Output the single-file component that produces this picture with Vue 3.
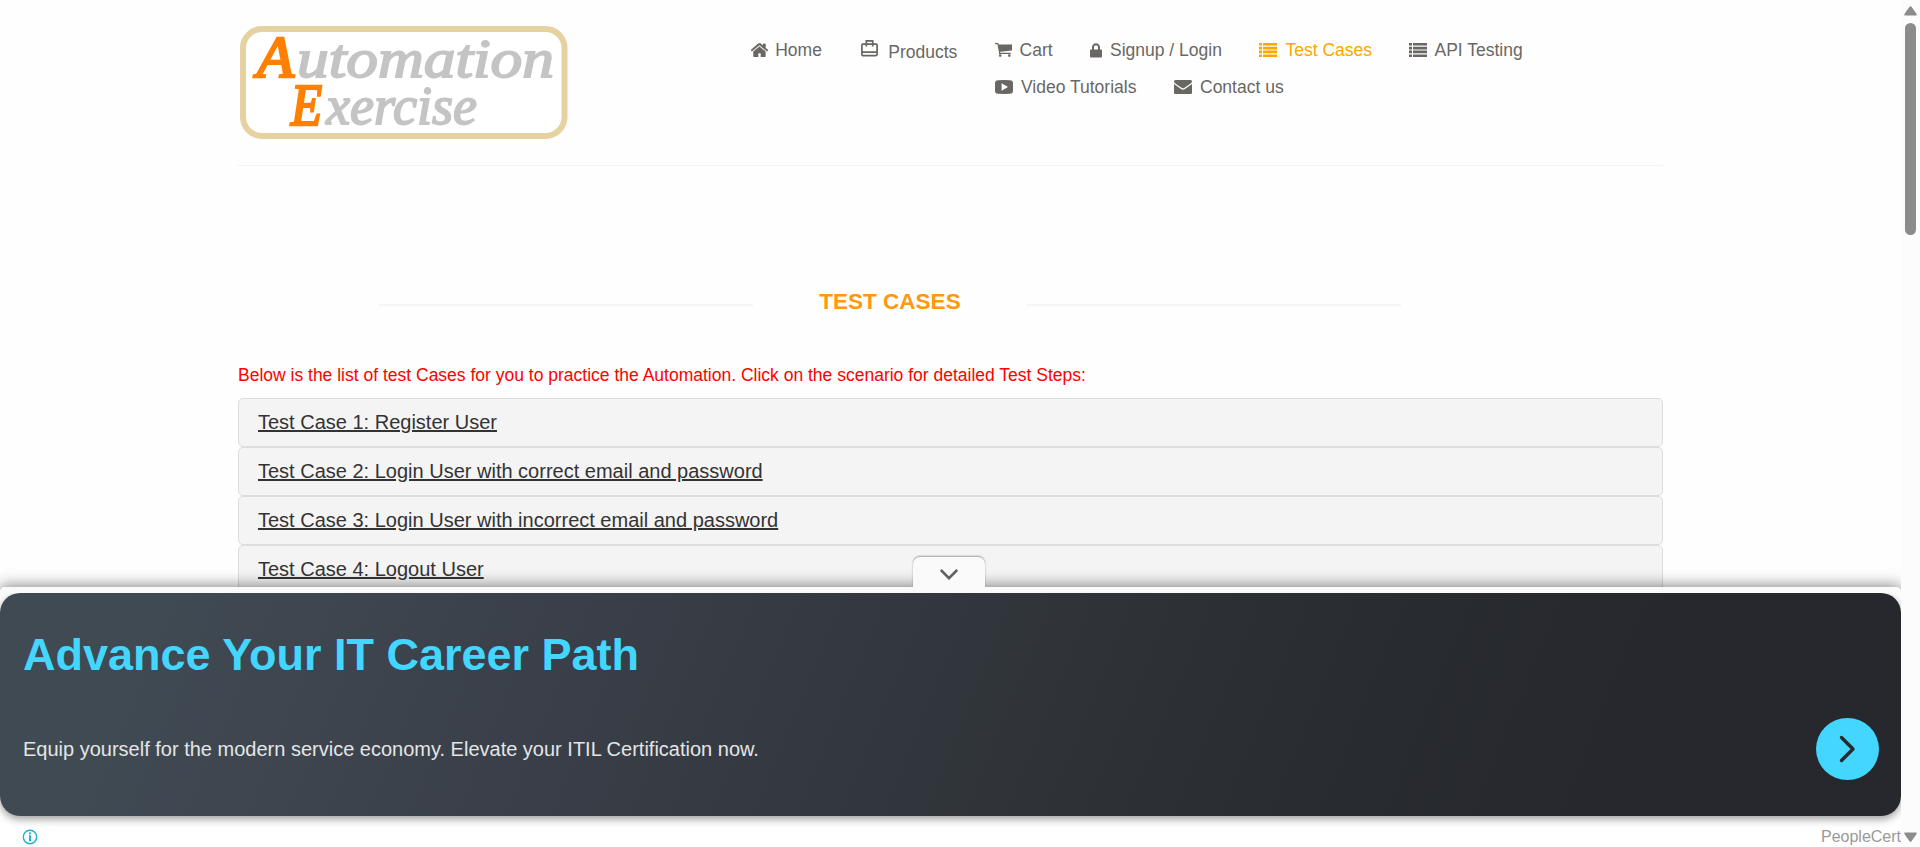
<script setup>
const topRow = [
  { id: 'home', label: 'Home', w: 110, iw: 24.2 },
  { id: 'products', label: 'Products', w: 134, iw: 27.3, low: true },
  { id: 'cart', label: 'Cart', w: 95, iw: 24.6 },
  { id: 'lock', label: 'Signup / Login', w: 169, iw: 20 },
  { id: 'list', label: 'Test Cases', w: 150, iw: 26.5, active: true },
  { id: 'list', label: 'API Testing', w: 130, iw: 25.5 },
]
const bottomRow = [
  { id: 'video', label: 'Video Tutorials', w: 179, iw: 26 },
  { id: 'mail', label: 'Contact us', w: 130, iw: 26 },
]
const cases = [
  'Test Case 1: Register User',
  'Test Case 2: Login User with correct email and password',
  'Test Case 3: Login User with incorrect email and password',
  'Test Case 4: Logout User',
]
</script>

<template>
  <div class="page">
    <div class="viewport">
      <header class="header">
        <svg class="logo" width="327" height="113" viewBox="0 0 327 113">
          <rect x="3" y="3" width="321.5" height="107" rx="19" fill="#fff" stroke="#e6d1a1" stroke-width="6" />
          <g class="script">
            <text x="17" y="51" class="big" textLength="37" lengthAdjust="spacingAndGlyphs">A</text>
            <text x="57" y="51" textLength="257" lengthAdjust="spacingAndGlyphs">utomation</text>
            <text x="51" y="99" class="big" textLength="31" lengthAdjust="spacingAndGlyphs">E</text>
            <text x="86" y="98" textLength="151" lengthAdjust="spacingAndGlyphs">xercise</text>
          </g>
        </svg>
        <nav class="nav">
          <ul v-for="(row, r) in [topRow, bottomRow]" :key="r" class="row" :class="{ second: r === 1 }">
            <li v-for="item in row" :key="item.label" class="item" :class="{ active: item.active, low: item.low }" :style="{ width: item.w + 'px' }">
              <span class="ico" :style="{ width: item.iw + 'px' }">
                <svg v-if="item.id === 'home'" width="17" height="14" viewBox="0 0 17 14"><path d="M8.4 3.7L2.6 8.5V13.2Q2.6 14 3.4 14H7V10H10V14H13.5Q14.3 14 14.3 13.2V8.5ZM.8 8.2L8.4 1.9L16.1 8.2L17 7.1L14.4 4.9V.9H12V2.9L9.4.6Q8.4-.1 7.5.6L0 7.1Z" stroke="currentColor" stroke-width=".6" /></svg>
                <svg v-else-if="item.id === 'products'" class="bag" width="17" height="17" viewBox="0 0 17 17"><path d="M5.3 4.2V.9H11.7V4.2M1.8 4.2H15.2Q16.1 4.2 16.1 5.1V14.3Q16.1 15.6 14.8 15.6H2.2Q.9 15.6.9 14.3V5.1Q.9 4.2 1.8 4.2ZM1 12.2H16M5.3 4V6.6M11.7 4V6.6" fill="none" stroke="currentColor" stroke-width="1.7" /></svg>
                <svg v-else-if="item.id === 'cart'" width="17" height="14" viewBox="0 0 17 14"><path d="M0 0H3.2L3.8 1.4H17V7.4L5.2 8.8V9.8H15.7V11H4V9.5L2.4 1.3H0Z" /><circle cx="5.2" cy="12.6" r="1.3" /><circle cx="14.3" cy="12.6" r="1.3" /></svg>
                <svg v-else-if="item.id === 'lock'" width="12" height="15" viewBox="0 0 12 15"><path d="M3 7V4.5A3 3.2 0 0 1 9 4.5V7" fill="none" stroke="currentColor" stroke-width="2" /><rect y="6.4" width="12" height="8.1" rx="1" /></svg>
                <svg v-else-if="item.id === 'list'" width="18" height="14" viewBox="0 0 18 14"><path d="M0 0H3V2.6H0ZM4 0H18V2.6H4ZM0 3.8H3V6.4H0ZM4 3.8H18V6.4H4ZM0 7.6H3V10.2H0ZM4 7.6H18V10.2H4ZM0 11.4H3V14H0ZM4 11.4H18V14H4Z" /></svg>
                <svg v-else-if="item.id === 'video'" width="18" height="14" viewBox="0 0 18 14"><path fill-rule="evenodd" d="M3 .2Q9-.2 15 .2Q18 .2 18 3.5Q18.2 7 18 10.5Q18 13.7 15 13.8Q9 14.1 3 13.8Q0 13.7 0 10.5Q-.2 7 0 3.5Q0 .2 3 .2ZM6.6 3.2V10.8L13 7Z" /></svg>
                <svg v-else width="18" height="14" viewBox="0 0 18 14"><path d="M1.3 0H16.7Q18 0 18 1.5Q18 2.7 16 4L10.5 7.7Q9 8.8 7.5 7.7L2 4Q0 2.7 0 1.5Q0 0 1.3 0ZM0 4L7 9Q9 10.3 11 9L18 4V12.7Q18 14 16.7 14H1.3Q0 14 0 12.7Z" /></svg>
              </span>
              <span class="lbl">{{ item.label }}</span>
            </li>
          </ul>
        </nav>
      </header>

      <main class="content">
        <div class="heading">
          <i class="rule"></i>
          <h2>Test Cases</h2>
          <i class="rule"></i>
        </div>
        <p class="intro">Below is the list of test Cases for you to practice the Automation. Click on the scenario for detailed Test Steps:</p>
        <div v-for="c in cases" :key="c" class="panel"><u>{{ c }}</u></div>
      </main>

      <aside class="anchor">
        <div class="tab">
          <svg width="18" height="11" viewBox="0 0 18 11"><path d="M.8 1L9 9.2L17.2 1" fill="none" stroke="#5f6063" stroke-width="2.6" /></svg>
        </div>
        <div class="strip"></div>
        <div class="adbody">
          <section class="banner">
            <div>
              <h1>Advance Your IT Career Path</h1>
              <p>Equip yourself for the modern service economy. Elevate your ITIL Certification now.</p>
            </div>
            <span class="go">
              <svg width="17" height="28" viewBox="0 0 17 28"><path d="M2.5 2.5L14 14L2.5 25.5" fill="none" stroke="#26292e" stroke-width="3.4" stroke-linecap="round" stroke-linejoin="round" /></svg>
            </span>
          </section>
          <footer class="adfoot">
            <svg width="16" height="16" viewBox="0 0 16 16"><circle cx="8" cy="8" r="6.7" fill="none" stroke="#1fb1cd" stroke-width="1.4" /><path d="M7 3.6H9V5.3H7ZM7 6.3H9V12.2H7Z" fill="#1fb1cd" /></svg>
            <span>PeopleCert</span>
          </footer>
        </div>
      </aside>
    </div>

    <div class="scrollbar">
      <svg width="13" height="10" viewBox="0 0 13 10"><path d="M5.5.8Q6.5-.3 7.5.8L12.6 8Q13 9.5 12 9.6H1Q0 9.5.4 8Z" fill="#8b8b8b" /></svg>
      <div class="thumb"></div>
      <svg class="down" width="13" height="10" viewBox="0 0 13 10"><path d="M5.5 9.2Q6.5 10.3 7.5 9.2L12.6 2Q13 .5 12 .4H1Q0 .5.4 2Z" fill="#8b8b8b" /></svg>
    </div>
  </div>
</template>

<style>
body {
  margin: 0;
  background: #fefefe;
}
</style>

<style scoped>
.page {
  display: flex;
  width: 1920px;
  height: 847px;
  overflow: hidden;
  background: #fefefe;
  font-family: "Liberation Sans", Arial, sans-serif;
}
.viewport {
  position: relative;
  width: 1901px;
  height: 847px;
  overflow: hidden;
}
.header {
  display: flex;
  align-items: flex-start;
  box-sizing: border-box;
  width: 1425px;
  height: 166px;
  margin-left: 238px;
  padding: 26px 0 0 2px;
  border-bottom: 1px solid #f4f4f4;
}
.logo {
  flex: none;
  overflow: visible;
}
.script {
  font-family: "Liberation Serif", serif;
  font-style: italic;
  font-weight: 400;
  font-size: 54px;
  fill: #c4c4c4;
  stroke: #c4c4c4;
  stroke-width: 1.8px;
}
.script .big {
  font-size: 59px;
  fill: #ff8000;
  stroke: #ff8000;
  stroke-width: 2.6px;
}
.nav {
  margin: 12px 0 0 184px;
}
.row {
  display: flex;
  margin: 0;
  padding: 0;
  list-style: none;
  height: 37px;
}
.second {
  margin-left: 244px;
}
.item {
  display: flex;
  align-items: center;
  height: 24px;
  color: #696763;
  font-size: 17.5px;
  line-height: 24px;
  white-space: nowrap;
}
.item.active {
  color: orange;
}
.ico {
  display: flex;
  flex: none;
}
.ico svg {
  fill: currentColor;
}
.item.low {
  height: 27px;
}
.bag {
  margin-bottom: 7px;
}
.content {
  width: 1425px;
  margin-left: 238px;
}
.heading {
  display: flex;
  align-items: center;
  justify-content: space-between;
  width: 1022px;
  margin: 123px 0 0 141px;
  height: 26px;
}
.rule {
  width: 374px;
  height: 2px;
  margin-top: 6px;
  background: #f5f5f5;
}
.heading h2 {
  margin: 0;
  font-size: 22.5px;
  line-height: 26px;
  color: #fe980f;
  text-transform: uppercase;
}
.intro {
  margin: 48px 0 11px;
  font-size: 17.5px;
  line-height: 24px;
  color: #f00;
}
.panel {
  box-sizing: border-box;
  height: 49px;
  padding: 12px 19px;
  border: 1px solid #ddd;
  border-radius: 5px;
  background: #f4f4f4;
  color: #333;
  font-size: 20px;
  line-height: 23px;
}
.anchor {
  position: absolute;
  left: 0;
  bottom: 0;
  width: 1901px;
  height: 260px;
  border-radius: 5px 5px 0 0;
  background: #fff;
  box-shadow: 0 0 15px 1px rgba(0, 0, 0, 0.5);
}
.tab {
  position: absolute;
  left: 913px;
  top: -30px;
  display: flex;
  align-items: center;
  justify-content: center;
  box-sizing: border-box;
  width: 72px;
  height: 30px;
  padding-top: 5px;
  border-radius: 7px 7px 0 0;
  background: #fafafa;
  box-shadow: 0 -1px 2px rgba(0, 0, 0, 0.35);
}
.strip {
  position: relative;
  height: 6px;
  border-radius: 5px 5px 0 0;
  background: #fafafa;
}
.banner {
  display: flex;
  justify-content: space-between;
  box-sizing: border-box;
  height: 223px;
  padding: 35px 22px 0 23px;
  border-radius: 20px;
  background: linear-gradient(112deg, #404a53 8%, #3c424c 24%, #31363c 50%, #282b2f 72%, #26282d 85%);
  box-shadow: 0 3px 8px rgba(0, 0, 0, 0.4);
}
.banner h1 {
  margin: 0;
  font-size: 45px;
  line-height: 54px;
  color: #43d6ff;
}
.banner p {
  margin: 54px 0 0;
  font-size: 20px;
  line-height: 26px;
  color: #e4e5e6;
}
.go {
  display: flex;
  align-items: center;
  justify-content: center;
  width: 63px;
  height: 62px;
  margin-top: 90px;
  border-radius: 50%;
  background: #43d6ff;
}
.adfoot {
  display: flex;
  justify-content: space-between;
  align-items: center;
  height: 31px;
  padding: 11px 0 0 22px;
  box-sizing: border-box;
  font-size: 16px;
  color: #999;
}
.scrollbar {
  display: flex;
  flex-direction: column;
  align-items: center;
  box-sizing: border-box;
  width: 19px;
  height: 847px;
  padding: 6px 0 5px;
  background: #fcfcfc;
}
.thumb {
  width: 11px;
  height: 212px;
  margin-top: 7px;
  border-radius: 6px;
  background: #8b8b8b;
}
.down {
  margin-top: auto;
}
</style>
